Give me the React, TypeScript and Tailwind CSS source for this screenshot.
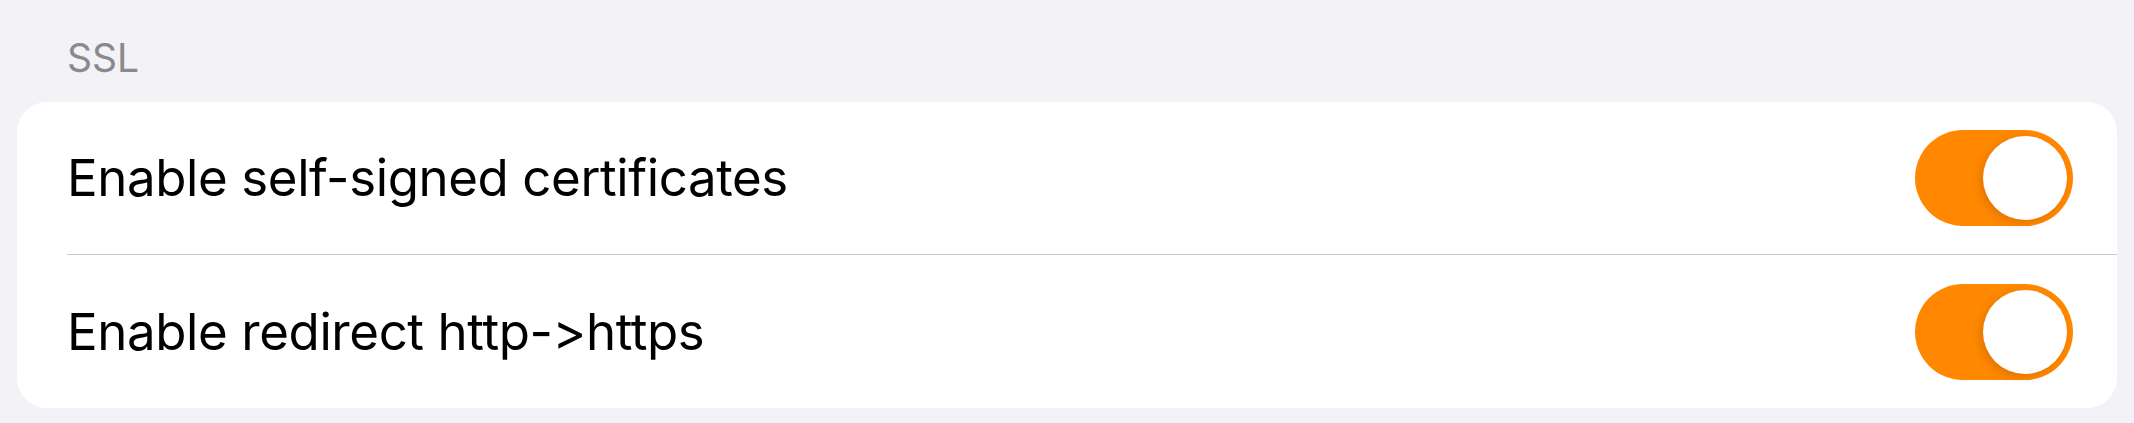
import React from "react";

type Setting = { label: string; on: boolean };

const settings: Setting[] = [
  { label: "Enable self-signed certificates", on: true },
  { label: "Enable redirect http->https", on: true },
];

const Toggle: React.FC<{ on: boolean }> = ({ on }) => (
  <div
    className={`flex h-[96px] w-[158px] shrink-0 items-center rounded-full p-[6px] ${
      on ? "justify-end bg-[#ff8800]" : "justify-start bg-[#e9e9eb]"
    }`}
  >
    <div className="h-[84px] w-[84px] rounded-full bg-white shadow-[-3px_3px_8px_rgba(120,50,0,0.22)]" />
  </div>
);

export default function App() {
  return (
    <div className="h-[423px] w-full bg-[#f2f2f7] px-[17px] font-['Inter','Liberation_Sans',sans-serif] [font-feature-settings:'calt'_0,'liga'_0]">
      <div className="flex h-[102px] items-end pb-[21px] pl-[50px]">
        <span className="text-[39px] leading-[47px] text-[#8a8a8e]">SSL</span>
      </div>
      <div className="overflow-hidden rounded-[30px] bg-white">
        {settings.map((s, i) => (
          <div key={i} className="pl-[50px]">
            <div
              className={`flex items-center justify-between pr-[44px] ${
                i < settings.length - 1 ? "h-[153px] border-b border-[#c8c8cc]" : "h-[153px]"
              }`}
            >
              <span className="text-[51px] leading-[62px] tracking-[-0.4px] text-black">{s.label}</span>
              <Toggle on={s.on} />
            </div>
          </div>
        ))}
      </div>
    </div>
  );
}
